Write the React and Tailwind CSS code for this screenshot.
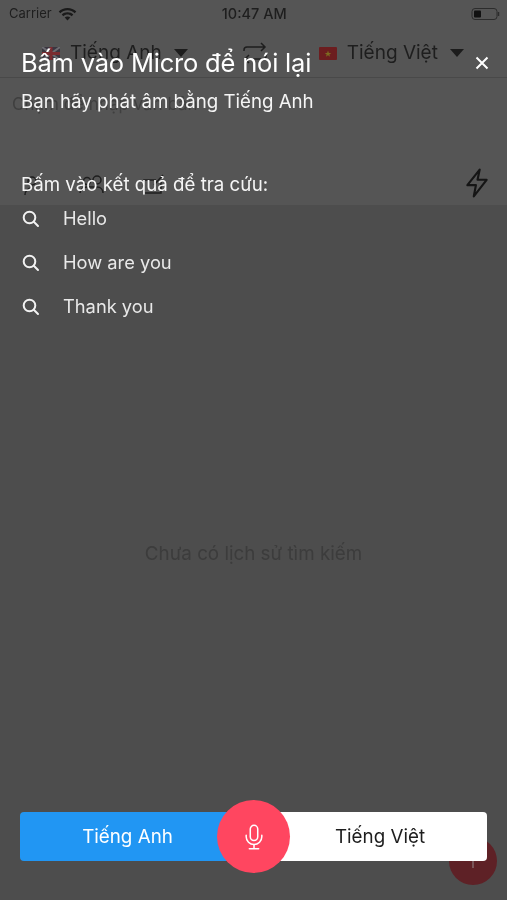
import React from "react";

const font = { fontFamily: '"Inter", "Liberation Sans", sans-serif' };

function Search() {
  return (
    <svg width="20" height="20" viewBox="0 0 20 20" fill="none" stroke="#f2f2f2" strokeWidth="2" strokeLinecap="round">
      <circle cx="8.500" cy="8.500" r="5.800" />
      <path d="M12.800 12.800 L17 17" />
    </svg>
  );
}

function Mic({ size = 28, color = "#fff", sw = 1.3 }) {
  return (
    <svg width={size} height={size} viewBox="0 0 24 24" fill="none" stroke={color} strokeWidth={sw} strokeLinecap="round">
      <rect x="8.800" y="2" width="6.400" height="13" rx="3.200" />
      <path d="M5.300 10.500v1.300a6.700 6.700 0 0 0 13.400 0v-1.300" />
      <path d="M12 18.500V22M8 22h8" />
    </svg>
  );
}

function Caret() {
  return <div className="w-0 h-0 border-l-[7px] border-r-[7px] border-t-[8px] border-l-transparent border-r-transparent border-t-[#1c1c1c]" />;
}

function Background() {
  return (
    <div className="flex flex-col h-full bg-[#4d4d4d]">
      <div className="bg-[#555555]">
        <div className="h-[28px] flex items-center justify-between pl-[9px] pr-[6px] text-[13px] text-[#1e1e1e]">
          <div className="flex items-center gap-[6px]">
            <span>Carrier</span>
            <svg width="19" height="14" viewBox="0 0 19 14" fill="#1a1a1a">
              <path d="M9.500 1C6 1 3 2.300.7 4.500l1.600 1.700C4.200 4.400 6.700 3.300 9.500 3.300s5.300 1.100 7.200 2.900l1.600-1.700C16 2.300 13 1 9.500 1z" />
              <path d="M9.500 5.200c-2.300 0-4.300.9-5.800 2.300l1.600 1.700c1.100-1 2.600-1.700 4.200-1.700s3.100.7 4.200 1.700l1.600-1.700c-1.500-1.400-3.500-2.300-5.800-2.300z" />
              <path d="M9.500 9.400c-1.100 0-2.100.4-2.800 1.100l2.800 3 2.800-3c-.7-.7-1.700-1.100-2.800-1.100z" />
            </svg>
          </div>
          <span className="text-[14.500px] font-medium ml-[-39px]">10:47 AM</span>
          <svg width="30" height="14" viewBox="0 0 30 14" fill="none">
            <rect x="1" y="1.500" width="25" height="11" rx="3" stroke="#2c2c2c" strokeWidth="1" />
            <rect x="3" y="3.500" width="7" height="7" rx="1" fill="#111" />
            <path d="M27.500 5v4" stroke="#2c2c2c" strokeWidth="1.500" />
          </svg>
        </div>
        <div className="h-[50px] flex items-center border-b border-[#494949] text-[19px] text-[#1e1e1e] pl-[42px] pt-[1px]">
          <svg width="18" height="13" viewBox="0 0 18 13" className="mr-[10px]">
            <rect width="18" height="13" fill="#3a3540" />
            <path d="M0 0L18 13M18 0L0 13" stroke="#6b6b70" strokeWidth="2" />
            <path d="M9 0v13M0 6.500h18" stroke="#7a2b30" strokeWidth="3" />
          </svg>
          <span>Tiếng Anh</span>
          <div className="ml-[12px]"><Caret /></div>
          <svg width="24" height="22" viewBox="0 0 24 22" fill="none" stroke="#1e1e1e" strokeWidth="1.500" className="ml-[55px]">
            <path d="M1 9V8a3 3 0 0 1 3-3h18M18 1l4 4-4 4M23 13v1a3 3 0 0 1-3 3H2M6 21l-4-4 4-4" />
          </svg>
          <svg width="18" height="13" viewBox="0 0 18 13" className="ml-[52px] mr-[10px]">
            <rect width="18" height="13" rx="1" fill="#6c1d1f" />
            <path d="M9 3.500l.9 2.400h2.400l-2 1.500.8 2.400L9 8.300 6.900 9.800l.8-2.400-2-1.500h2.400z" fill="#7d6a20" />
          </svg>
          <span>Tiếng Việt</span>
          <div className="ml-[12px]"><Caret /></div>
        </div>
        <div className="h-[127px]">
          <div className="pl-[12px] pt-[14px] text-[17px] text-[#3f3f3f]">Chạm để nhập văn bản</div>
          <div className="flex items-center pl-[20px] pr-[17px] mt-[54px] text-[#1e1e1e]">
            <svg width="24" height="24" viewBox="0 0 24 24" fill="none" stroke="#1e1e1e" strokeWidth="1.500"><circle cx="12" cy="8" r="4" /><path d="M5 22c0-4 3-7 7-7" /></svg>
            <svg width="32" height="24" viewBox="0 0 32 24" fill="none" stroke="#1e1e1e" strokeWidth="1.500" className="ml-[32px]"><circle cx="11" cy="8" r="3.500" /><circle cx="21" cy="7" r="4" /><path d="M4 20c0-3 3-6 7-6h10c4 0 6 3 6 6" /></svg>
            <svg width="24" height="24" viewBox="0 0 24 24" fill="none" stroke="#1e1e1e" strokeWidth="1.500" className="ml-[33px]"><path d="M20 9v11H3V7h12M22 2l-9 10" /></svg>
            <svg width="26" height="30" viewBox="0 0 24 28" fill="none" stroke="#151515" strokeWidth="2" strokeLinejoin="round" className="ml-auto mt-[-4px]">
              <path d="M14.500 1.500L3 16h8l-2 10.500L21 11h-8.500z" />
            </svg>
          </div>
        </div>
      </div>
      <div className="flex-1 flex flex-col items-center pt-[335px] text-[18.800px] text-[#3c3c3c]">
        Chưa có lịch sử tìm kiếm
      </div>
      <div className="absolute right-[10px] bottom-[15px] w-[48px] h-[48px] rounded-full bg-[#5e2126] flex items-center justify-center">
        <div className="w-[2px] h-[14px] bg-[#7a5558]" />
      </div>
    </div>
  );
}

function Overlay() {
  const items = ["Hello", "How are you", "Thank you"];
  return (
    <div className="absolute inset-0 flex flex-col text-[#f5f5f5] px-[21px] pt-[46px]">
      <div className="flex items-center justify-between">
        <div className="text-[25.500px] leading-[34px] tracking-[-0.2px] text-white">Bấm vào Micro để nói lại</div>
        <svg width="14" height="14" viewBox="0 0 14 14" stroke="#fff" strokeWidth="2" className="mr-[-3px]"><path d="M1.500 1.500l11 11M12.500 1.500l-11 11" /></svg>
      </div>
      <div className="text-[18.700px] leading-[24px] mt-[10px]">Bạn hãy phát âm bằng Tiếng Anh</div>
      <div className="text-[18.700px] leading-[24px] mt-[59px]">Bấm vào kết quả để tra cứu:</div>
      <div className="flex flex-col">
        {items.map((t) => (
          <div key={t} className="h-[44px] flex items-center text-[18.300px] text-[#e9e9e9]">
            <div className="w-[42px]"><Search /></div>
            <span>{t}</span>
          </div>
        ))}
      </div>
      <div className="mt-auto mb-[27px] -mx-[1px] relative flex items-center h-[74px]">
        <div className="flex-1 flex h-[49px] rounded-[4px] overflow-hidden text-[18.800px]">
          <div className="w-[234px] bg-[#2196f3] text-white flex items-center justify-center pr-[19px] pt-[3px]">Tiếng Anh</div>
          <div className="flex-1 bg-white text-[#1e1e1e] flex items-center justify-center pl-[19px] pt-[3px]">Tiếng Việt</div>
        </div>
        <div className="absolute left-[197px] top-[1px] w-[73px] h-[73px] rounded-full bg-[#ff4660] flex items-center justify-center">
          <Mic />
        </div>
      </div>
    </div>
  );
}

export default function App() {
  return (
    <div className="relative w-[507px] h-[900px] overflow-hidden blur-[0.4px]" style={font}>
      <Background />
      <Overlay />
    </div>
  );
}
